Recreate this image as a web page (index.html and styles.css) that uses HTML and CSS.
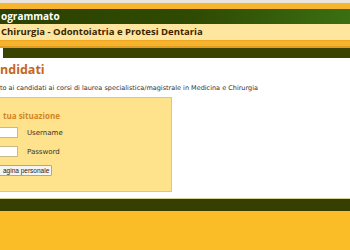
FILE: index.html
```html
<!DOCTYPE html>
<html lang="it">
<head>
    <meta charset="UTF-8">
    <meta name="viewport" content="width=device-width, initial-scale=1.0">
    <title>Accesso programmato</title>
    <link rel="stylesheet" href="styles.css">
</head>
<body>
    <div class="toolbar"></div>
    <div class="header">
        <div class="header-title">ogrammato</div>
        <div class="header-sub">Chirurgia - Odontoiatria e Protesi Dentaria</div>
        <div class="header-band"></div>
    </div>
    <div class="nav"></div>
    <div class="content">
        <h1 class="page-title">ndidati</h1>
        <p class="intro">to ai candidati ai corsi di laurea specialistica/magistrale in Medicina e Chirurgia</p>
        <form class="login-box">
            <div class="login-title">tua situazione</div>
            <div class="login-row">
                <input type="text" class="login-input">
                <label class="login-label">Username</label>
            </div>
            <div class="login-row">
                <input type="password" class="login-input">
                <label class="login-label">Password</label>
            </div>
            <button type="button" class="login-btn">agina personale</button>
        </form>
    </div>
    <div class="footer">
        <div class="footer-bar"></div>
        <div class="footer-base"></div>
    </div>
</body>
</html>
```

FILE: styles.css
```css
body {
    margin: 0;
    padding: 0;
    font-family: "DejaVu Sans", Verdana, sans-serif;
    background-color: white;
    overflow: hidden;
}
.toolbar {
    height: 3px;
    background-color: #e9e5dc;
}
.header {
    border-top: 6px solid #f6b52c;
    font-family: "Open Sans", "DejaVu Sans", sans-serif;
}
.header-title {
    height: 15px;
    line-height: 15px;
    padding-left: 1px;
    background: linear-gradient(to right, #2c4200, #2f4a02 55%, #3b6f12);
    color: white;
    font-size: 10px;
    font-weight: bold;
}
.header-sub {
    height: 16px;
    line-height: 16px;
    padding-left: 1px;
    background-color: #ffe69e;
    color: #3a2500;
    font-size: 9.5px;
    font-weight: bold;
}
.header-band {
    height: 8px;
    background-color: #f6b42e;
    border-top: 1px solid #f3a824;
    box-sizing: border-box;
    border-bottom: 2px solid #e19c22;
}
.nav {
    height: 10px;
    margin-left: 3px;
    background-color: #3a4300;
}
.content {
    padding-top: 5px;
}
.page-title {
    margin: 0;
    font-family: "Open Sans", "DejaVu Sans", sans-serif;
    font-size: 12.5px;
    line-height: 14px;
    color: #c5661d;
}
.intro {
    margin: 7px 0 0 0;
    font-size: 6.5px;
    line-height: 8px;
    color: #333;
}
.login-box {
    width: 172px;
    height: 95px;
    margin-top: 5px;
    box-sizing: border-box;
    padding: 13px 0 0 3px;
    background-color: #ffe28c;
    border: 1px solid #e7c672;
    border-left: none;
}
.login-title {
    font-family: "Open Sans", "DejaVu Sans", sans-serif;
    font-size: 8px;
    line-height: 10px;
    font-weight: bold;
    color: #d6841c;
    margin-bottom: 6px;
}
.login-row {
    display: flex;
    align-items: center;
    gap: 9px;
    margin-left: -6px;
    margin-bottom: 8px;
}
.login-input {
    width: 21px;
    height: 11px;
    margin: 0;
    padding: 0;
    box-sizing: border-box;
    border: 1px solid #c9b88a;
    background-color: white;
}
.login-label {
    font-size: 7px;
    color: #333;
}
.login-btn {
    display: block;
    margin: 2px 0 0 -6px;
    padding: 0 2px 0 5px;
    height: 11px;
    font-family: "Liberation Sans", Arial, sans-serif;
    font-size: 6.5px;
    color: #222;
    background-color: #f4f4f0;
    border: 1px solid #a9a9a0;
    border-radius: 1px;
}
.footer {
    margin-top: 6px;
}
.footer-bar {
    height: 12px;
    background-color: #373f00;
    border-top: 1px solid #d6cf98;
}
.footer-base {
    height: 40px;
    background-color: #fbbd27;
}
```
